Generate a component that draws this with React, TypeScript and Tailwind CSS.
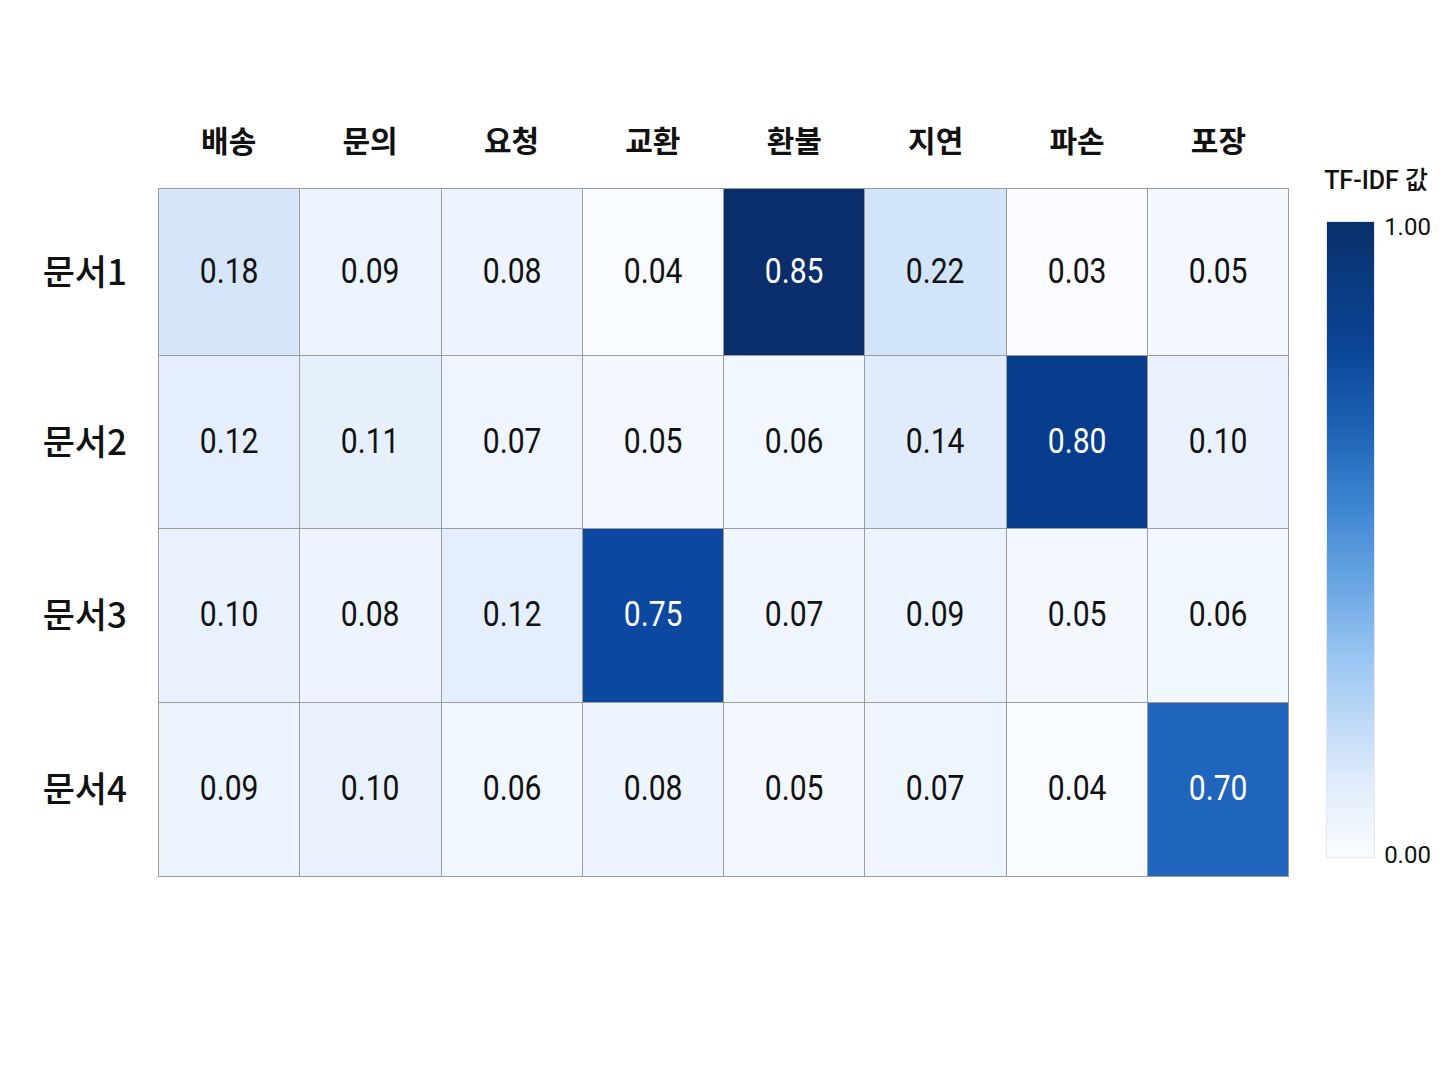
const terms = ["배송", "문의", "요청", "교환", "환불", "지연", "파손", "포장"];

const docs = [
  { name: "문서1", values: ["0.18", "0.09", "0.08", "0.04", "0.85", "0.22", "0.03", "0.05"] },
  { name: "문서2", values: ["0.12", "0.11", "0.07", "0.05", "0.06", "0.14", "0.80", "0.10"] },
  { name: "문서3", values: ["0.10", "0.08", "0.12", "0.75", "0.07", "0.09", "0.05", "0.06"] },
  { name: "문서4", values: ["0.09", "0.10", "0.06", "0.08", "0.05", "0.07", "0.04", "0.70"] },
];

// Blues scale, picked by hand from the reference
const cellBg: Record<string, string> = {
  "0.03": "bg-[#fafcff]",
  "0.04": "bg-[#f8fbff]",
  "0.05": "bg-[#f3f8fe]",
  "0.06": "bg-[#f1f7fe]",
  "0.07": "bg-[#eff5fe]",
  "0.08": "bg-[#edf4fd]",
  "0.09": "bg-[#ebf3fd]",
  "0.10": "bg-[#e8f1fd]",
  "0.11": "bg-[#e6f0fc]",
  "0.12": "bg-[#e4eefc]",
  "0.14": "bg-[#e0ecfb]",
  "0.18": "bg-[#d6e6fa]",
  "0.22": "bg-[#d2e4fa]",
  "0.70": "bg-[#1f65bb]",
  "0.75": "bg-[#0c47a0]",
  "0.80": "bg-[#083c8d]",
  "0.85": "bg-[#0a2d6c]",
};

const rowHeights = ["h-[167px]", "h-[173px]", "h-[174px]", "h-[174px]"];

const numFont = "font-['Roboto','Noto_Sans_CJK_KR',sans-serif]";
const krFont = "font-['Noto_Sans_CJK_KR',sans-serif]";

export default function App() {
  return (
    <div className="w-[1448px] h-[1086px] bg-white pt-[109px] flex">
      <div className="flex flex-col">
        {/* column headers */}
        <div className="flex h-[60px] items-center mb-[19px] pl-[158px]">
          {terms.map((t) => (
            <div
              key={t}
              className={`w-[141.4px] text-center text-[30px] font-bold text-[#111] ${krFont}`}
            >
              {t}
            </div>
          ))}
        </div>

        <div className="flex">
          {/* row labels */}
          <div className="w-[158px] flex flex-col">
            {docs.map((d, i) => (
              <div
                key={d.name}
                className={`${rowHeights[i]} flex items-center justify-end pr-[31px] text-[35px] font-medium text-[#111] ${krFont}`}
              >
                <span className="-mt-[3px]">{d.name}</span>
              </div>
            ))}
          </div>

          {/* heatmap */}
          <div className="w-[1131px] border-l border-t border-[#9c9c9c] flex flex-col">
            {docs.map((d, i) => (
              <div key={d.name} className={`grid grid-cols-8 ${rowHeights[i]}`}>
                {d.values.map((v, j) => {
                  const dark = parseFloat(v) >= 0.5;
                  return (
                    <div
                      key={j}
                      className={`${cellBg[v]} border-r border-b border-[#9c9c9c] flex items-center justify-center text-[35px] ${numFont} ${
                        dark ? "text-white" : "text-[#111]"
                      }`}
                    >
                      <span className="inline-block scale-x-[0.86]">{v}</span>
                    </div>
                  );
                })}
              </div>
            ))}
          </div>
        </div>
      </div>

      {/* colour legend */}
      <div className="ml-[35px] flex flex-col pt-[59px]">
        <div className={`h-[26px] leading-[26px] text-[25px] font-medium text-[#111] whitespace-nowrap ${numFont}`}>
          TF-IDF 값
        </div>
        <div className="flex mt-[27px] ml-[2px]">
          <div className="w-[49px] h-[637px] border border-[#e4e8ee] bg-[linear-gradient(to_bottom,#08306b_0%,#0b4596_20%,#1c61b4_32%,#3e86d2_45%,#6aa6e3_57%,#97c4f1_68%,#c4dcf8_80%,#e4effd_90%,#f9fcff_100%)]" />
          <div className={`ml-[9px] -mt-[7px] h-[654px] flex flex-col justify-between text-[24px] leading-[26px] text-[#111] ${numFont}`}>
            <span>1.00</span>
            <span>0.00</span>
          </div>
        </div>
      </div>
    </div>
  );
}
